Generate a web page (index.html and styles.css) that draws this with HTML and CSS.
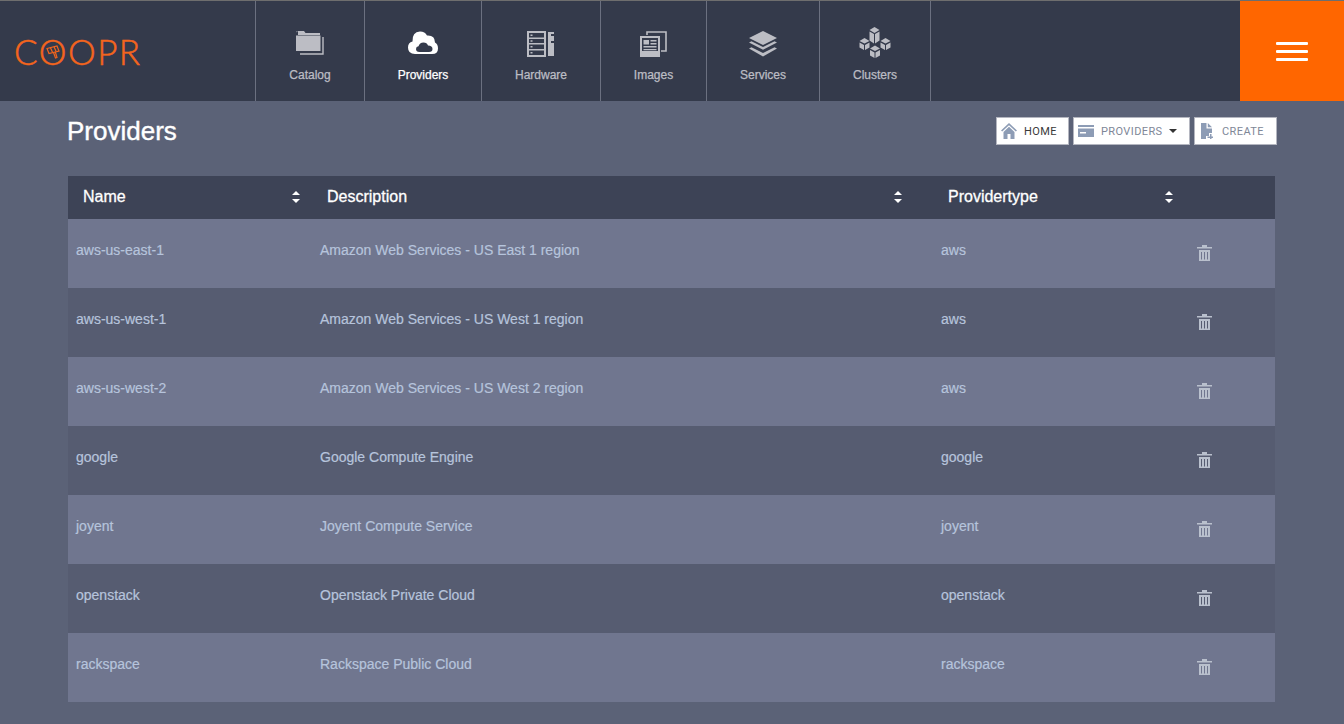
FILE: index.html
```html
<!DOCTYPE html>
<html>
<head>
	<title>Coopr - Providers</title>
	<link rel="stylesheet" href="styles.css">
</head>
<body>
<header class="topbar">
  <a class="logo">
    <span class="logo-text">COOPR</span>
    <svg class="logo-hammer" viewBox="0 0 16 16" width="16" height="16" fill="none" stroke="#f4651d" stroke-width="1.2">
      <path d="M2 4.5 L12 2 L14 7 L4 9.5 Z"/>
      <path d="M5.5 3.7 L7.5 8.3 M9 2.8 L11 7.2"/>
      <path d="M8.5 8.5 L10.5 14 L12 13.4 L10.3 8"/>
    </svg>
  </a>
  <nav class="tabs">
    <a class="tab tab-catalog">
      <svg class="tab-icon" viewBox="0 0 28 24" width="28" height="24">
        <path d="M0 1.5 Q0 0 1.5 0 H8 L9.5 2 H24 V4 H2 V0 Z M0 4.5 H24.5 V20 H0 Z" fill="currentColor"/>
        <path d="M27 6 V23 H4" fill="none" stroke="currentColor" stroke-width="1.4"/>
      </svg>
      <span>Catalog</span>
    </a>
    <a class="tab tab-active tab-providers">
      <svg class="tab-icon" viewBox="0 0 30 24" width="30" height="24">
        <path d="M7 23 Q0 23 0 16.5 Q0 11.5 4.5 10.5 Q4 1 12 0.5 Q17 0.5 19 4.5 Q27 4 27 11.5 Q30 13 30 17.5 Q30 23 24 23 Z" fill="currentColor"/>
        <path d="M11.5 21 Q8 21 8 18 Q8 15.5 10.5 15.3 Q11.5 11.5 15.5 11.5 Q19 11.5 20 14.5 Q24.5 14.5 24.5 18 Q24.5 21 21 21 Z" fill="#343a4b"/>
      </svg>
      <span>Providers</span>
    </a>
    <a class="tab tab-hardware">
      <svg class="tab-icon" viewBox="0 0 28 26" width="28" height="26">
        <path d="M0 0 H19 V26 H0 Z M2 2 V6.5 H17 V2 Z M2 8 V12 H17 V8 Z M2 13.5 V18 H17 V13.5 Z M2 19.5 V24 H17 V19.5 Z" fill="currentColor" fill-rule="evenodd"/>
        <path d="M3.5 3.5 h2 v1.5 h-2 z M3.5 9.3 h2 v1.5 h-2 z M3.5 15 h2 v1.5 h-2 z M3.5 21 h2 v1.5 h-2 z" fill="currentColor"/>
        <path d="M21 1 H27 V3 H24 V5 H27 V10 H24 V12 H27 V25 H21 Z" fill="currentColor"/>
      </svg>
      <span>Hardware</span>
    </a>
    <a class="tab tab-images">
      <svg class="tab-icon" viewBox="0 0 27 26" width="27" height="26">
        <path d="M7 4 V1 H26 V20 H21" fill="none" stroke="currentColor" stroke-width="1.6"/>
        <path d="M0 5 H20 V26 H0 Z M2 7 V20 H18 V7 Z" fill="currentColor" fill-rule="evenodd"/>
        <path d="M3.5 9 H9 V13.5 H3.5 Z M10.5 9 H16.5 V10.5 H10.5 Z M10.5 12 H16.5 V13.5 H10.5 Z M3.5 15 H16.5 V16.5 H3.5 Z M3.5 18 H16.5 V19.3 H3.5 Z" fill="currentColor"/>
      </svg>
      <span>Images</span>
    </a>
    <a class="tab tab-services">
      <svg class="tab-icon" viewBox="0 0 30 26" width="30" height="26">
        <path d="M15 0 L29 7 L15 14 L1 7 Z" fill="currentColor"/>
        <path d="M1 11.5 L3.5 10.2 L15 16 L26.5 10.2 L29 11.5 L15 18.7 Z" fill="currentColor"/>
        <path d="M1 17.5 L3.5 16.2 L15 22 L26.5 16.2 L29 17.5 L15 25.5 Z" fill="currentColor"/>
      </svg>
      <span>Services</span>
    </a>
    <a class="tab tab-clusters">
      <svg class="tab-icon" viewBox="0 0 32 32" width="32" height="32">
        <path d="M15.5 0 L20.5 3 L15.5 6 L10.5 3 Z M10.5 4.5 L15 7 V16.5 L10.5 13.5 Z M20.5 4.5 L16 7 V16.5 L20.5 13.5 Z" fill="currentColor"/>
        <path d="M5.5 11 L10.5 14 L5.5 16.5 L0.500 14 Z M0.500 15.5 L5 18 V23 L0.500 20.500 Z M10.500 15.500 L6 18 V23 L10.500 20.500 Z" fill="currentColor"/>
        <path d="M26.500 11 L31.500 14 L26.500 16.500 L21.500 14 Z M21.500 15.500 L26 18 V23 L21.500 20.500 Z M31.500 15.500 L27 18 V23 L31.500 20.500 Z" fill="currentColor"/>
        <path d="M16 18.500 L21 21.500 L16 24 L11 21.500 Z M11 23 L15.500 25.500 V31 L11 28.500 Z M21 23 L16.500 25.500 V31 L21 28.500 Z" fill="currentColor"/>
      </svg>
      <span>Clusters</span>
    </a>
  </nav>
  <button class="menu-toggle"><i></i><i></i><i></i></button>
</header>

<main class="page">
  <div class="page-head">
    <h1>Providers</h1>
    <div class="crumbs">
      <a class="crumb crumb-home">
        <svg viewBox="0 0 16 16" width="16" height="16"><path d="M8 0 L16 7.500 L14.800 8.500 L8 2.300 L1.200 8.500 L0 7.500 Z M2.500 9 L8 3.800 L13.500 9 V16 H9.500 V11 H6.500 V16 H2.500 Z" fill="#8d9cb5"/></svg>
        <span>HOME</span>
      </a>
      <a class="crumb crumb-providers">
        <svg viewBox="0 0 16 12" width="16" height="12"><path d="M0 0 H16 V2 H0 Z M0 3.500 H16 V12 H0 Z M2 7 V8.500 H8 V7 Z" fill="#8d9cb5" fill-rule="evenodd"/></svg>
        <span>PROVIDERS</span> <b class="caret"></b>
      </a>
      <a class="crumb crumb-create">
        <svg viewBox="0 0 12 16" width="12" height="16"><path d="M0 0 H5.500 V5.500 H11 V10 H8 V13 H5 V16 H0 Z M6.800 0 L11 4.200 H6.800 Z" fill="#8d9cb5"/><path d="M6.500 13.500 H9 V11 H10.500 V13.500 H12 V15 H10.500 V16 H9 V15 H6.500 Z" fill="#8d9cb5"/></svg>
        <span>CREATE</span>
      </a>
    </div>
  </div>

  <table class="grid">
    <colgroup>
      <col class="col-name"><col class="col-desc"><col class="col-type"><col class="col-del">
    </colgroup>
    <thead>
      <tr>
        <th><div class="th th-name">Name <span class="sort"></span></div></th>
        <th><div class="th th-desc">Description <span class="sort"></span></div></th>
        <th><div class="th th-type">Providertype <span class="sort"></span></div></th>
        <th></th>
      </tr>
    </thead>
    <tbody id="rows">
      <tr>
        <td>aws-us-east-1</td><td>Amazon Web Services - US East 1 region</td><td>aws</td>
        <td><svg class="trash" viewBox="0 0 15 16" width="15" height="16"><use href="#trash-shape"/></svg></td>
      </tr>
      <tr>
        <td>aws-us-west-1</td><td>Amazon Web Services - US West 1 region</td><td>aws</td>
        <td><svg class="trash" viewBox="0 0 15 16" width="15" height="16"><use href="#trash-shape"/></svg></td>
      </tr>
      <tr>
        <td>aws-us-west-2</td><td>Amazon Web Services - US West 2 region</td><td>aws</td>
        <td><svg class="trash" viewBox="0 0 15 16" width="15" height="16"><use href="#trash-shape"/></svg></td>
      </tr>
      <tr>
        <td>google</td><td>Google Compute Engine</td><td>google</td>
        <td><svg class="trash" viewBox="0 0 15 16" width="15" height="16"><use href="#trash-shape"/></svg></td>
      </tr>
      <tr>
        <td>joyent</td><td>Joyent Compute Service</td><td>joyent</td>
        <td><svg class="trash" viewBox="0 0 15 16" width="15" height="16"><use href="#trash-shape"/></svg></td>
      </tr>
      <tr>
        <td>openstack</td><td>Openstack Private Cloud</td><td>openstack</td>
        <td><svg class="trash" viewBox="0 0 15 16" width="15" height="16"><use href="#trash-shape"/></svg></td>
      </tr>
      <tr>
        <td>rackspace</td><td>Rackspace Public Cloud</td><td>rackspace</td>
        <td><svg class="trash" viewBox="0 0 15 16" width="15" height="16"><use href="#trash-shape"/></svg></td>
      </tr>
    </tbody>
  </table>
</main>

<svg class="defs" width="0" height="0">
  <symbol id="trash-shape" viewBox="0 0 15 16">
    <path d="M5 0 H10 V2 H15 V3.500 H0 V2 H5 Z M2 5 H13 V16 H2 Z M4 7 V14.500 H5 V7 Z M7 7 V14.500 H8 V7 Z M10 7 V14.500 H11 V7 Z" fill="currentColor" fill-rule="evenodd"/>
  </symbol>
</svg>
</body>
</html>
```

FILE: styles.css
```css
html, body {
  height: 100%;
  margin: 0;
}

body {
  background-color: #5b6277;
  font-family: "Liberation Sans", Arial, sans-serif;
  overflow: hidden;
}

.defs {
  display: block;
  height: 0;
}

/* top bar */
.topbar {
  display: flex;
  height: 100px;
  background-color: #343a4b;
  border-top: 1px solid #6e6e6e;
}

.logo {
  position: relative;
  display: block;
  width: 255px;
  box-sizing: border-box;
  padding: 30px 0 0 14px;
}

.logo-text {
  font-family: Lato, sans-serif;
  font-weight: 300;
  font-size: 35px;
  line-height: 40px;
  letter-spacing: 1.5px;
  color: #f4651d;
  -webkit-text-stroke: 0.5px #f4651d;
}

.logo-hammer {
  position: absolute;
  top: 43px;
  left: 45px;
}

.tabs {
  display: flex;
  flex: 1;
}

.tab {
  display: flex;
  flex-direction: column;
  align-items: center;
  box-sizing: border-box;
  height: 100px;
  border-left: 1px solid #6b7080;
  color: #bcbdc4;
  font-size: 12px;
  line-height: 14px;
  -webkit-text-stroke: 0.25px currentColor;
}

.tab:last-child {
  border-right: 1px solid #6b7080;
}

.tab span {
  position: absolute;
  top: 68px;
}

.tab-icon {
  display: block;
  margin-top: 30px;
}

.tab-catalog { width: 109px; }
.tab-providers { width: 117px; }
.tab-hardware { width: 119px; }
.tab-images { width: 106px; }
.tab-services { width: 113px; }
.tab-clusters { width: 112px; }

.tab-active {
  color: #fff;
}

.tab-clusters .tab-icon {
  margin-top: 26px;
}

.menu-toggle {
  display: flex;
  flex-direction: column;
  align-items: center;
  justify-content: center;
  gap: 5px;
  width: 104px;
  height: 100px;
  padding: 0;
  border: 0;
  background-color: #ff6600;
}

.menu-toggle i {
  display: block;
  width: 32px;
  height: 3px;
  border-radius: 1px;
  background-color: #fff;
}

/* page */
.page {
  padding: 0 67px 0 68px;
}

.page-head {
  display: flex;
  justify-content: space-between;
  align-items: flex-start;
  height: 75px;
  padding-top: 16px;
  box-sizing: border-box;
}

h1 {
  margin: -1px 0 0 -1px;
  font-size: 26px;
  line-height: 30px;
  font-weight: normal;
  color: #fff;
  -webkit-text-stroke: 0.4px #fff;
}

.crumbs {
  display: flex;
  gap: 4px;
}

.crumb {
  display: flex;
  align-items: center;
  box-sizing: border-box;
  height: 28px;
  padding-left: 4px;
  background-color: #fff;
  border: 1px solid #b4b6c0;
  font-family: Roboto, sans-serif;
  font-size: 11px;
  letter-spacing: 0.4px;
  color: #808797;
}

.crumb span {
  margin-left: 7px;
}

.crumb-home {
  width: 73px;
  color: #3a3a3a;
}

.crumb-providers {
  width: 117px;
}

.crumb-create {
  width: 83px;
  padding-left: 6px;
}

.crumb-create span {
  margin-left: 9px;
}

.caret {
  width: 0;
  height: 0;
  margin-left: 6px;
  border-left: 4px solid transparent;
  border-right: 4px solid transparent;
  border-top: 4px solid #333;
}

/* table */
.grid {
  width: 1207px;
  table-layout: fixed;
  border-collapse: collapse;
  font-size: 14px;
}

.col-name { width: 244px; }
.col-desc { width: 621px; }
.col-type { width: 254px; }
.col-del { width: 88px; }

.grid th {
  height: 43px;
  padding: 0;
  background-color: #3d4356;
  color: #fff;
  font-size: 16px;
  font-weight: normal;
  text-align: left;
  -webkit-text-stroke: 0.3px #fff;
}

.th {
  display: flex;
  justify-content: space-between;
  align-items: center;
  padding-bottom: 2px;
}

.th-name { padding-left: 15px; padding-right: 12px; }
.th-desc { padding-left: 15px; padding-right: 31px; }
.th-type { padding-left: 15px; padding-right: 14px; }

.sort {
  display: block;
  position: relative;
  width: 8px;
  height: 12px;
}

.sort::before, .sort::after {
  content: "";
  position: absolute;
  left: 0;
  border-left: 4px solid transparent;
  border-right: 4px solid transparent;
}

.sort::before {
  top: 0;
  border-bottom: 4px solid #fff;
}

.sort::after {
  bottom: 0;
  border-top: 4px solid #fff;
}

.grid td {
  height: 69px;
  box-sizing: border-box;
  padding: 21px 8px 0;
  vertical-align: top;
  line-height: 20px;
  color: #b6c4dc;
  -webkit-text-stroke: 0.2px #b6c4dc;
}

.grid tbody tr:nth-child(odd) {
  background-color: #70768f;
}

.grid tbody tr:nth-child(even) {
  background-color: #565c71;
}

.grid td:last-child {
  padding: 26px 0 0 10px;
}

.trash {
  display: block;
  color: #b9c0cd;
}
```
